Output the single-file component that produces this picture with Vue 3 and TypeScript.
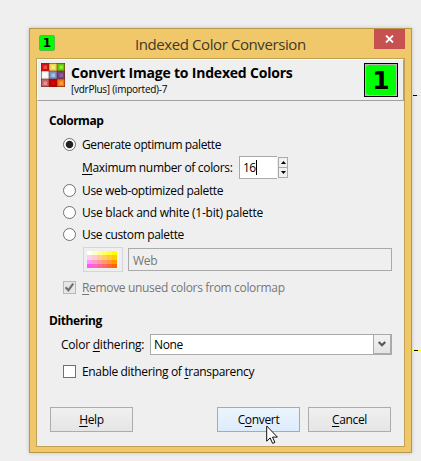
<script setup lang="ts">
import { ref } from 'vue'

type PaletteMode = 'generate' | 'web' | 'mono' | 'custom'

const mode = ref<PaletteMode>('generate')
const maxColors = ref<number>(16)
const removeUnused = ref<boolean>(true)
const ditherAlpha = ref<boolean>(false)

const tiles: string[] = ['#d01414', '#ecd64c', '#62c40c', '#f4f4f4', '#7396c8', '#75427c', '#c86468', '#c00000', '#e87818']
const tileCores: string[] = ['#f04848', '#f6ea88', '#8cf030', '#ffffff', '#a0c4ec', '#925e9c', '#dc9496', '#e00000', '#ff9c38']
const palette: string[][] = [
  ['#ffffff', '#ffffcc', '#ffff99', '#ffff66', '#ffff33', '#ffff00'],
  ['#ffccff', '#ffcccc', '#ffcc99', '#ffcc66', '#ffcc33', '#ffcc00'],
  ['#ff99ff', '#ff99cc', '#ff9999', '#ff9966', '#ff9933', '#ff9900'],
  ['#ff55ff', '#ff66cc', '#ff6699', '#ff6666', '#ff6633', '#ff6600'],
]
</script>

<template>
  <div class="desktop">
    <i class="dash upper"></i>
    <i class="dash lower"></i>
    <section class="window">
      <header class="titlebar">
        <span class="app-icon">1</span>
        <h1><span>Indexed Color Conversion</span></h1>
        <button class="close" aria-label="Close">
          <svg width="9" height="8" viewBox="0 0 9 8"><path d="M1 .5 8 7.5M8 .5 1 7.5" stroke="#fff" stroke-width="1.8" /></svg>
        </button>
      </header>
      <main class="client">
        <div class="banner">
          <svg class="tiles" width="24" height="24" viewBox="0 0 24 24">
            <g v-for="(c, i) in tiles" :key="i">
              <rect :x="(i % 3) * 8" :y="Math.floor(i / 3) * 8" width="8" height="8" :fill="c" />
              <rect :x="(i % 3) * 8 + 2.5" :y="Math.floor(i / 3) * 8 + 2.5" width="3.5" height="3.5" :fill="tileCores[i]" />
            </g>
            <path d="M0 .5H24M.5 0V24M8 0V24M16 0V24M0 8H24M0 16H24M0 23.5H24M23.5 0V24" stroke="#7c1c10" stroke-opacity=".55" fill="none" />
          </svg>
          <div class="banner-text">
            <strong>Convert Image to Indexed Colors</strong>
            <small>[vdrPlus] (imported)-7</small>
          </div>
          <div class="thumb"><span>1</span></div>
        </div>

        <div class="form">
          <h2>Colormap</h2>
          <div class="row choice" @click="mode = 'generate'">
            <span class="radio" :class="{ on: mode === 'generate' }"></span>
            <span class="t-gen">Generate optimum palette</span>
          </div>
          <div class="row spin-row">
            <span class="t-max"><u>M</u>aximum number of colors:</span>
            <div class="spin">
              <div class="spin-field">{{ maxColors }}<i class="caret"></i></div>
              <div class="arrows">
                <button aria-label="Increase" @click="maxColors++"><svg width="5" height="3" viewBox="0 0 5 3"><path d="M0 3 2.5 0 5 3z" /></svg></button>
                <button aria-label="Decrease" @click="maxColors--"><svg width="5" height="3" viewBox="0 0 5 3"><path d="M0 0 2.5 3 5 0z" /></svg></button>
              </div>
            </div>
          </div>
          <div class="row choice" @click="mode = 'web'">
            <span class="radio" :class="{ on: mode === 'web' }"></span>
            <span class="t-web">Use web-optimized palette</span>
          </div>
          <div class="row choice" @click="mode = 'mono'">
            <span class="radio" :class="{ on: mode === 'mono' }"></span>
            <span class="t-mono">Use black and white (1-bit) palette</span>
          </div>
          <div class="row choice" @click="mode = 'custom'">
            <span class="radio" :class="{ on: mode === 'custom' }"></span>
            <span class="t-custom">Use custom palette</span>
          </div>
          <div class="palette-row">
            <div class="swatch">
              <svg width="32" height="17" viewBox="0 0 32 17" shape-rendering="crispEdges">
                <rect width="32" height="17" fill="#f8f8f8" />
                <template v-for="(line, y) in palette" :key="y">
                  <rect v-for="(c, x) in line" :key="x" :x="x * 5" :y="y * 4.25" width="5" height="4.25" :fill="c" />
                </template>
              </svg>
            </div>
            <div class="entry">Web</div>
          </div>
          <div class="row choice remove disabled">
            <span class="check">
              <svg v-if="removeUnused" width="11" height="11" viewBox="0 0 11 11"><path d="M1.6 5.2 4.4 8.2 9.2 1.6" fill="none" stroke="#707070" stroke-width="2.2" /></svg>
            </span>
            <span class="t-remove"><u>R</u>emove unused colors from colormap</span>
          </div>

          <h2 class="dither">Dithering</h2>
          <div class="combo-row">
            <span class="t-dither">Color <u>d</u>ithering:</span>
            <div class="combo">
              <span>None</span>
              <button aria-label="Open list">
                <svg width="8" height="6" viewBox="0 0 8 6"><path d="M.7 1 4 4.3 7.3 1" fill="none" stroke="#555" stroke-width="2.2" /></svg>
              </button>
            </div>
          </div>
          <div class="row choice alpha" @click="ditherAlpha = !ditherAlpha">
            <span class="check"></span>
            <span class="t-alpha">Enable dithering of <u>t</u>ransparency</span>
          </div>

          <footer>
            <button class="btn"><span><u>H</u>elp</span></button>
            <button class="btn hot"><span>C<u>o</u>nvert</span></button>
            <button class="btn"><span><u>C</u>ancel</span></button>
          </footer>
        </div>
      </main>
    </section>
    <svg class="cursor" width="13" height="20" viewBox="0 0 13 20">
      <path d="M.7 1v15.2l3.5-3.3 2.4 5.5 2.3-1-2.4-5.3h4.9z" fill="#fff" stroke="#111" stroke-width="1" />
    </svg>
  </div>
</template>

<style>
body {
  background: #efefef;
}
</style>

<style scoped>
* {
  box-sizing: border-box;
}
.desktop {
  position: relative;
  width: 421px;
  height: 461px;
  padding: 28px 0 0 29px;
  overflow: hidden;
  background: #efefef;
  font: 12px/16px "Open Sans", "Noto Sans", sans-serif;
  letter-spacing: -0.33px;
  color: #000;
}
button {
  font: inherit;
  letter-spacing: inherit;
  color: inherit;
  padding: 0;
  margin: 0;
}
.dash {
  position: absolute;
  height: 1px;
}
.upper {
  left: 413px;
  top: 95px;
  width: 8px;
  background: linear-gradient(90deg, #000 4px, #ff0 4px);
}
.lower {
  left: 412px;
  top: 350px;
  width: 9px;
  background: linear-gradient(90deg, #ff0 2px, #000 2px 6px, #ff0 6px);
}
.window {
  width: 383px;
  height: 425px;
  padding: 0 6px 6px;
  border: 1px solid #b9974a;
  background: #f0c86a;
  box-shadow: 0 0 4px rgba(0, 0, 0, 0.2);
}
.titlebar {
  display: flex;
  height: 29px;
  padding-left: 3px;
}
.app-icon {
  width: 16px;
  height: 16px;
  margin-top: 6px;
  border: 1px solid #5ab84a;
  border-radius: 2px;
  background: #0f0;
  font: bold 12px/14px "DejaVu Sans", sans-serif;
  letter-spacing: 0;
  text-align: center;
}
h1 {
  flex: 1;
  margin: 0;
  padding: 4px 0 0 80px;
  font-size: 15px;
  line-height: 22px;
  font-weight: 400;
  letter-spacing: -0.41px;
  color: #41382a;
  white-space: nowrap;
}
.close {
  width: 31px;
  height: 20px;
  border: 0;
  background: #c75050;
  display: flex;
  align-items: center;
  justify-content: center;
}
.client {
  height: 389px;
  border: 1px solid #c0a055;
  background: #efefef;
}
.banner {
  display: flex;
  height: 42px;
  padding: 3px 5px 0 3px;
  border: 1px solid #a0a0a0;
  border-top-color: #fff;
  border-left-color: #fff;
}
.banner-text {
  flex: 1;
  display: flex;
  flex-direction: column;
  padding-left: 6px;
  white-space: nowrap;
}
.banner-text strong {
  font-size: 14px;
  line-height: 20px;
  letter-spacing: -0.2px;
}
.banner-text small {
  font-size: 10px;
  line-height: 12px;
  letter-spacing: -0.26px;
}
.thumb {
  width: 34px;
  height: 34px;
  border: 1px solid #000;
  background: #b8b8b8;
}
.thumb span {
  display: block;
  height: 30px;
  margin: 1px;
  border-radius: 3px;
  background: #0f0;
  font: bold 25px/32px "DejaVu Sans", sans-serif;
  letter-spacing: 0;
  text-align: center;
}
.form {
  padding: 12px 12px 0;
}
h2 {
  margin: 0;
  font-size: 12px;
  line-height: 16px;
  letter-spacing: -0.5px;
}
.row {
  display: flex;
  align-items: center;
  height: 21px;
  white-space: nowrap;
}
.choice {
  gap: 6px;
  padding-left: 14px;
  margin-bottom: 1px;
}
h2 + .choice {
  margin-top: 5px;
}
.t-gen {
  letter-spacing: -0.41px;
}
.t-mono {
  letter-spacing: -0.24px;
}
.radio {
  width: 13px;
  height: 13px;
  border: 1px solid #707070;
  border-radius: 50%;
  background: #fff;
}
.radio.on {
  background: radial-gradient(circle, #222 3.3px, #fff 4.2px);
}
.spin-row {
  height: 23px;
  margin-bottom: 1px;
  padding-left: 33px;
}
.t-max {
  width: 157px;
}
.spin {
  display: flex;
  align-items: center;
}
.spin-field {
  display: flex;
  align-items: center;
  width: 38px;
  height: 23px;
  padding-left: 3px;
  border: 1px solid #aaa;
  border-right: 0;
  background: #fff;
  letter-spacing: -0.5px;
}
.caret {
  width: 1px;
  height: 15px;
  background: #000;
}
.arrows {
  padding-left: 1px;
}
.arrows button {
  display: flex;
  align-items: center;
  justify-content: center;
  width: 10px;
  height: 11px;
  border: 1px solid #aaa;
  background: #f0f0f0;
}
.arrows button + button {
  margin-top: -1px;
}
.palette-row {
  display: flex;
  align-items: center;
  gap: 5px;
  height: 25px;
  margin: 2px 0 5px;
  padding-left: 34px;
}
.swatch {
  width: 40px;
  height: 25px;
  padding: 3px;
  border: 1px solid #d6d6d6;
}
.swatch svg {
  display: block;
}
.entry {
  width: 264px;
  height: 23px;
  padding-left: 4px;
  border: 1px solid #aaa;
  line-height: 23px;
  color: #777;
}
.disabled {
  color: #777;
}
.check {
  width: 13px;
  height: 13px;
  border: 1px solid #707070;
  background: #fff;
}
.check svg {
  display: block;
}
.disabled .check {
  border-color: #b8b8b8;
  background: #e6e6e6;
}
.dither {
  margin-top: 15px;
  letter-spacing: -0.4px;
}
.combo-row {
  display: flex;
  align-items: center;
  height: 21px;
  margin: 5px 0 6px;
  padding-left: 12px;
  white-space: nowrap;
}
.t-dither {
  width: 89px;
  letter-spacing: -0.22px;
}
.combo {
  display: flex;
  justify-content: space-between;
  width: 242px;
  height: 21px;
  padding-left: 3px;
  border: 1px solid #aaa;
  background: #fff;
  line-height: 20px;
}
.combo button {
  display: flex;
  align-items: center;
  justify-content: center;
  width: 18px;
  border: 1px solid #aaa;
  border-top-width: 0;
  background: linear-gradient(#f2f2f2, #e4e4e4);
}
footer {
  display: flex;
  gap: 8px;
  margin-top: 25px;
  padding-left: 1px;
}
.btn {
  width: 83px;
  height: 25px;
  border: 1px solid #acacac;
  background: linear-gradient(#f0f0f0, #e5e5e5);
  line-height: 22px;
}
.btn:first-child {
  margin-right: 76px;
}
.hot {
  border-color: #7eb4ea;
  background: linear-gradient(#ecf4fc, #dcecfc);
}
.cursor {
  position: absolute;
  left: 266px;
  top: 425px;
}
u {
  text-underline-offset: 2px;
}
</style>
